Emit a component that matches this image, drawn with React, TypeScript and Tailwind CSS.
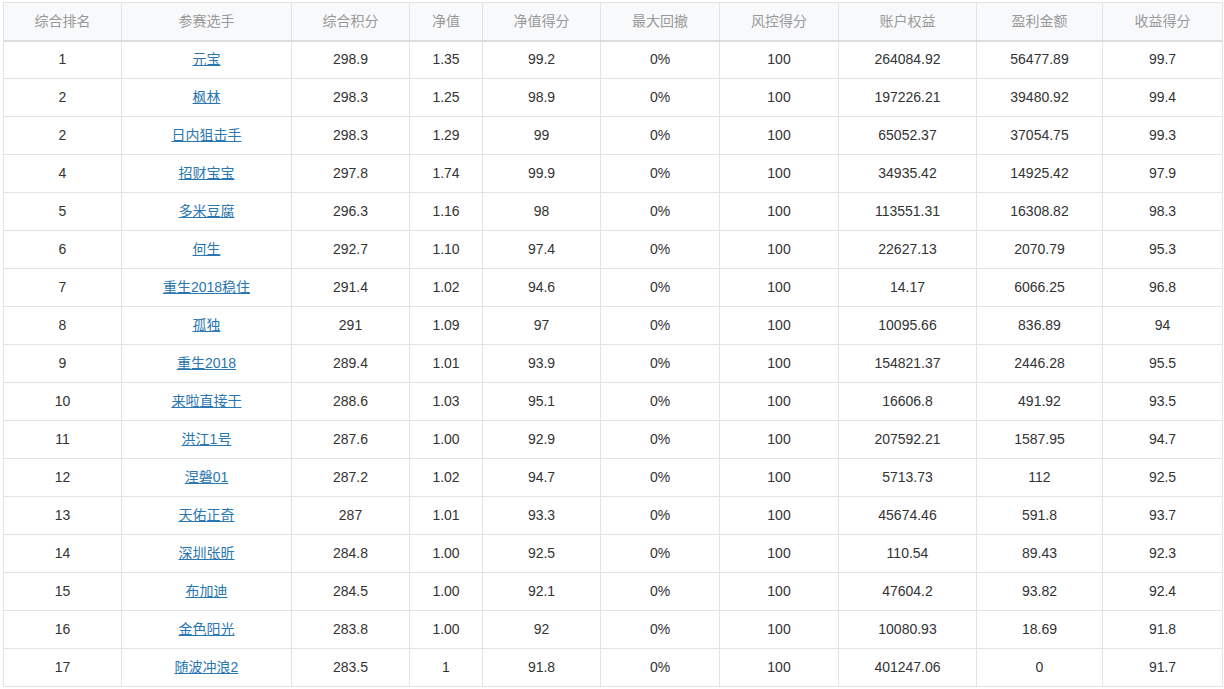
const headers = ['综合排名', '参赛选手', '综合积分', '净值', '净值得分', '最大回撤', '风控得分', '账户权益', '盈利金额', '收益得分']
const widths = ['w-[118px]', 'w-[170px]', 'w-[118px]', 'w-[73px]', 'w-[118px]', 'w-[119px]', 'w-[119px]', 'w-[138px]', 'w-[126px]', 'w-[120px]']

const rows: string[][] = [
  ['1', '元宝', '298.9', '1.35', '99.2', '0%', '100', '264084.92', '56477.89', '99.7'],
  ['2', '枫林', '298.3', '1.25', '98.9', '0%', '100', '197226.21', '39480.92', '99.4'],
  ['2', '日内狙击手', '298.3', '1.29', '99', '0%', '100', '65052.37', '37054.75', '99.3'],
  ['4', '招财宝宝', '297.8', '1.74', '99.9', '0%', '100', '34935.42', '14925.42', '97.9'],
  ['5', '多米豆腐', '296.3', '1.16', '98', '0%', '100', '113551.31', '16308.82', '98.3'],
  ['6', '何生', '292.7', '1.10', '97.4', '0%', '100', '22627.13', '2070.79', '95.3'],
  ['7', '重生2018稳住', '291.4', '1.02', '94.6', '0%', '100', '14.17', '6066.25', '96.8'],
  ['8', '孤独', '291', '1.09', '97', '0%', '100', '10095.66', '836.89', '94'],
  ['9', '重生2018', '289.4', '1.01', '93.9', '0%', '100', '154821.37', '2446.28', '95.5'],
  ['10', '来啦直接干', '288.6', '1.03', '95.1', '0%', '100', '16606.8', '491.92', '93.5'],
  ['11', '洪江1号', '287.6', '1.00', '92.9', '0%', '100', '207592.21', '1587.95', '94.7'],
  ['12', '涅磐01', '287.2', '1.02', '94.7', '0%', '100', '5713.73', '112', '92.5'],
  ['13', '天佑正奇', '287', '1.01', '93.3', '0%', '100', '45674.46', '591.8', '93.7'],
  ['14', '深圳张昕', '284.8', '1.00', '92.5', '0%', '100', '110.54', '89.43', '92.3'],
  ['15', '布加迪', '284.5', '1.00', '92.1', '0%', '100', '47604.2', '93.82', '92.4'],
  ['16', '金色阳光', '283.8', '1.00', '92', '0%', '100', '10080.93', '18.69', '91.8'],
  ['17', '随波冲浪2', '283.5', '1', '91.8', '0%', '100', '401247.06', '0', '91.7'],
]

export default function App() {
  return (
    <div className="min-h-screen bg-white pl-[3px] pt-[2px] font-['Liberation_Sans','Noto_Sans_CJK_SC',sans-serif] text-[14px]">
      <table className="table-fixed border-collapse w-[1219px]">
        <colgroup>
          {widths.map((w, i) => (
            <col key={i} className={w} />
          ))}
        </colgroup>
        <thead>
          <tr className="bg-[#f8f9fb]">
            {headers.map((h) => (
              <th
                key={h}
                className="h-[38px] border border-[#e3e3e3] border-b-2 border-b-[#dcdcdc] p-0 text-center font-normal text-[#999999]"
              >
                {h}
              </th>
            ))}
          </tr>
        </thead>
        <tbody>
          {rows.map((row, r) => (
            <tr key={r}>
              {row.map((cell, c) => (
                <td
                  key={c}
                  className="h-[38px] border border-[#e3e3e3] p-0 text-center text-[#333333]"
                >
                  {c === 1 ? (
                    <a href="#" className="text-[#2a76b0] underline">
                      {cell}
                    </a>
                  ) : (
                    cell
                  )}
                </td>
              ))}
            </tr>
          ))}
        </tbody>
      </table>
    </div>
  )
}
